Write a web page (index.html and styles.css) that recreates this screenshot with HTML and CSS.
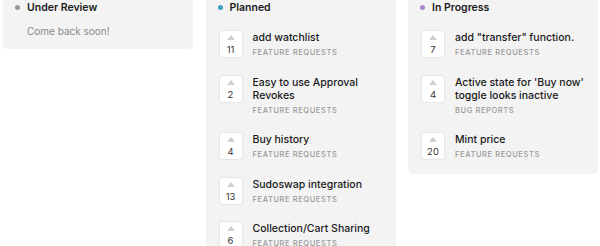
FILE: index.html
```html
<!DOCTYPE html>
<html>
<head>
<meta charset="utf-8">
<link rel="stylesheet" href="styles.css">
</head>
<body>
<div class="board">
  <div class="col">
    <div class="col-head"><span class="dot dot-review"></span>Under Review</div>
    <div class="empty">Come back soon!</div>
  </div>
  <div class="col col-items">
    <div class="col-head"><span class="dot dot-planned"></span>Planned</div>
    <div class="list">
      <div class="item"><div class="vote"><span class="tri"></span><span class="num">11</span></div><div class="info"><div class="title">add watchlist</div><div class="tag">Feature Requests</div></div></div>
      <div class="item"><div class="vote"><span class="tri"></span><span class="num">2</span></div><div class="info"><div class="title">Easy to use Approval Revokes</div><div class="tag">Feature Requests</div></div></div>
      <div class="item"><div class="vote"><span class="tri"></span><span class="num">4</span></div><div class="info"><div class="title">Buy history</div><div class="tag">Feature Requests</div></div></div>
      <div class="item"><div class="vote"><span class="tri"></span><span class="num">13</span></div><div class="info"><div class="title">Sudoswap integration</div><div class="tag">Feature Requests</div></div></div>
      <div class="item"><div class="vote"><span class="tri"></span><span class="num">6</span></div><div class="info"><div class="title">Collection/Cart Sharing</div><div class="tag">Feature Requests</div></div></div>
    </div>
  </div>
  <div class="col col-items">
    <div class="col-head"><span class="dot dot-progress"></span>In Progress</div>
    <div class="list">
      <div class="item"><div class="vote"><span class="tri"></span><span class="num">7</span></div><div class="info"><div class="title">add "transfer" function.</div><div class="tag">Feature Requests</div></div></div>
      <div class="item"><div class="vote"><span class="tri"></span><span class="num">4</span></div><div class="info"><div class="title">Active state for 'Buy now' toggle looks inactive</div><div class="tag">Bug Reports</div></div></div>
      <div class="item"><div class="vote"><span class="tri"></span><span class="num">20</span></div><div class="info"><div class="title">Mint price</div><div class="tag">Feature Requests</div></div></div>
    </div>
  </div>
</div>
</body>
</html>
```

FILE: styles.css
```css
html, body {
  margin: 0;
  padding: 0;
  background: #ffffff;
  font-family: "Inter", "Liberation Sans", sans-serif;
  color: #222;
}
.board {
  display: flex;
  align-items: flex-start;
  gap: 12.5px;
  padding-left: 3px;
}
.col {
  width: 190px;
  background: #f3f3f3;
  border-radius: 0 0 5px 5px;
  padding: 0 12px 12px 12px;
  box-sizing: border-box;
}
.col-items {
  padding-bottom: 13px;
}
.col-head {
  display: flex;
  align-items: center;
  height: 14px;
  font-size: 10.5px;
  font-weight: 600;
  color: #1a1a1a;
}
.dot {
  width: 5px;
  height: 5px;
  border-radius: 50%;
  margin-right: 7px;
  flex: none;
}
.dot-review { background: #8f9b97; }
.dot-planned { background: #3b9cc4; }
.dot-progress { background: #a988cf; }
.empty {
  margin-top: 11px;
  padding-left: 12px;
  font-size: 10px;
  line-height: 12px;
  color: #8a8a8a;
}
.list {
  display: flex;
  flex-direction: column;
  gap: 15.5px;
  margin-top: 16px;
  padding-left: 1px;
}
.item {
  display: flex;
  gap: 10px;
  align-items: flex-start;
}
.vote {
  width: 24px;
  height: 28px;
  flex: none;
  box-sizing: border-box;
  background: #fff;
  border: 1px solid #e6e6e6;
  border-radius: 3px;
  display: flex;
  flex-direction: column;
  align-items: center;
  padding-top: 4px;
}
.tri {
  width: 0;
  height: 0;
  border-left: 4.5px solid transparent;
  border-right: 4.5px solid transparent;
  border-bottom: 5px solid #cfcfcf;
}
.num {
  margin-top: 4px;
  font-size: 9.5px;
  line-height: 12px;
  color: #333;
}
.info {
  padding-top: 1px;
  min-width: 0;
}
.title {
  font-size: 10.5px;
  line-height: 13px;
  font-weight: 500;
  color: #1a1a1a;
}
.tag {
  margin-top: 3px;
  font-size: 7.5px;
  line-height: 12px;
  letter-spacing: 0.6px;
  text-transform: uppercase;
  font-weight: 500;
  color: #9a9a9a;
}
```
